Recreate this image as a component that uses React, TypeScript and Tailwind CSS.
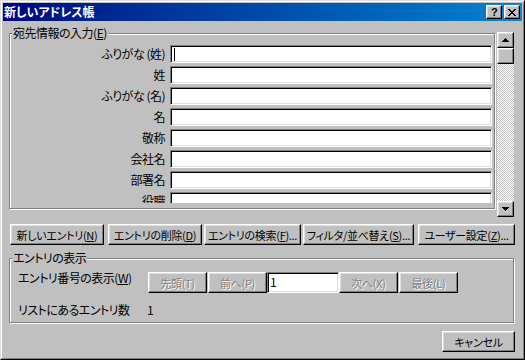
import React from "react";

const raised =
  "border border-t-white border-l-white border-r-black border-b-black shadow-[inset_-1px_-1px_0_#808080,inset_1px_1px_0_#dfdfdf] bg-[#c0c0c0]";
const sunken =
  "border border-t-[#808080] border-l-[#808080] border-r-white border-b-white shadow-[inset_1px_1px_0_#000,inset_-1px_-1px_0_#dfdfdf] bg-white";
const etched =
  "border border-[#808080] shadow-[inset_1px_1px_0_#fff,1px_1px_0_#fff]";

function U({ c }: { c: string }) {
  return <span className="underline underline-offset-[1px]">{c}</span>;
}

function Btn({
  children,
  className,
  disabled,
}: {
  children: React.ReactNode;
  className: string;
  disabled?: boolean;
}) {
  return (
    <div
      className={`${raised} ${className} h-[21px] flex items-center justify-center whitespace-nowrap text-[11px] tracking-[-0.3px] leading-[14px] ${
        disabled ? "text-[#808080] [text-shadow:1px_1px_0_#fff]" : "text-black"
      }`}
    >
      {children}
    </div>
  );
}

const labels = [
  "ふりがな (姓)",
  "姓",
  "ふりがな (名)",
  "名",
  "敬称",
  "会社名",
  "部署名",
  "役職",
];

export default function App() {
  return (
    <div className="w-[525px] h-[360px] bg-[#c0c0c0] border border-t-[#dfdfdf] border-l-[#dfdfdf] border-r-black border-b-black font-['Noto_Sans_CJK_JP','Noto_Sans',sans-serif] [font-feature-settings:'palt'] text-black text-[12px] tracking-[-0.5px] overflow-hidden">
      <div className="h-full border border-t-white border-l-white border-r-[#808080] border-b-[#808080] p-[1px] flex flex-col">
        {/* title bar */}
        <div className="h-[18px] shrink-0 flex items-center bg-linear-to-r from-[#000080] to-[#1084d0] pl-[1px] pr-[2px]">
          <span className="text-white font-bold text-[12px] leading-[14px] tracking-[0px]">
            新しいアドレス帳
          </span>
          <div className="ml-auto flex gap-[2px]">
            <div
              className={`${raised} w-[16px] h-[14px] flex items-center justify-center`}
            >
              <span className="font-['Liberation_Sans',sans-serif] font-bold text-[11px] leading-[11px] text-black">
                ?
              </span>
            </div>
            <div
              className={`${raised} w-[16px] h-[14px] flex items-center justify-center`}
            >
              <svg width="8" height="7" viewBox="0 0 8 7">
                <path
                  d="M0 0h2v1h1v1h2v-1h1v-1h2v1h-1v1h-1v1h-1v1h1v1h1v1h1v1h-2v-1h-1v-1h-2v1h-1v1h-2v-1h1v-1h1v-1h1v-1h-1v-1h-1v-1h-1z"
                  fill="#000"
                />
              </svg>
            </div>
          </div>
        </div>

        {/* body */}
        <div className="flex flex-col pl-[6px] pt-[11px]">
          <div className="flex items-start gap-[2px]">
            {/* group 1 */}
            <div className={`relative mt-[1px] w-[486px] h-[176px] ${etched}`}>
              <span className="absolute -top-[8px] left-[2px] px-[1px] bg-[#c0c0c0] leading-[14px]">
                宛先情報の入力(<U c="E" />)
              </span>
              <div className="mt-[11px] h-[158px] overflow-hidden flex flex-col gap-[3px]">
                {labels.map((l, i) => (
                  <div key={l} className="flex items-center h-[18px] shrink-0">
                    <div className="w-[155px] text-right leading-[14px] whitespace-nowrap">
                      {l}
                    </div>
                    <div
                      className={`${sunken} ml-[5px] w-[322px] h-[18px] flex items-center`}
                    >
                      {i === 0 && (
                        <div className="ml-[3px] w-[1px] h-[13px] bg-black" />
                      )}
                    </div>
                  </div>
                ))}
              </div>
            </div>

            {/* scrollbar */}
            <div className="w-[17px] h-[185px] flex flex-col">
              <div
                className={`${raised} w-[17px] h-[16px] flex items-center justify-center shrink-0`}
              >
                <svg width="7" height="4" viewBox="0 0 7 4">
                  <path d="M3 0h1v1h1v1h1v1h1v1h-7v-1h1v-1h1v-1h1z" fill="#000" />
                </svg>
              </div>
              <div className={`${raised} w-[17px] h-[16px] shrink-0`} />
              <div className="flex-1 [background-image:repeating-conic-gradient(#c0c0c0_0%_25%,#ffffff_0%_50%)] [background-size:2px_2px]" />
              <div
                className={`${raised} w-[17px] h-[16px] flex items-center justify-center shrink-0`}
              >
                <svg width="7" height="4" viewBox="0 0 7 4">
                  <path d="M0 0h7v1h-1v1h-1v1h-1v1h-1v-1h-1v-1h-1v-1h-1z" fill="#000" />
                </svg>
              </div>
            </div>
          </div>

          {/* action buttons */}
          <div className="flex mt-[7px] ml-[1px]">
            <Btn className="w-[94px]">
              新しいエントリ(<U c="N" />)
            </Btn>
            <Btn className="w-[94px] ml-[4px]">
              エントリの削除(<U c="D" />)
            </Btn>
            <Btn className="w-[97px] ml-[2px]">
              エントリの検索(<U c="F" />)...
            </Btn>
            <Btn className="w-[111px] ml-[2px]">
              フィルタ/並べ替え(<U c="S" />)...
            </Btn>
            <Btn className="w-[97px] ml-[4px]">
              ユーザー設定(<U c="Z" />)...
            </Btn>
          </div>

          {/* group 2 */}
          <div className={`relative mt-[13px] w-[505px] h-[65px] ${etched}`}>
            <span className="absolute -top-[8px] left-[2px] px-[1px] bg-[#c0c0c0] leading-[14px]">
              エントリの表示
            </span>
            <div className="flex items-start mt-[13px] ml-[8px]">
              <div className="w-[130px] leading-[12px] whitespace-nowrap">
                エントリ番号の表示(<U c="W" />)
              </div>
              <Btn className="w-[59px]" disabled>
                先頭(T)
              </Btn>
              <Btn className="w-[59px] ml-[1px]" disabled>
                前へ(P)
              </Btn>
              <div className={`${sunken} w-[72px] h-[21px] pl-[2px] leading-[17px]`}>
                1
              </div>
              <Btn className="w-[59px]" disabled>
                次へ(X)
              </Btn>
              <Btn className="w-[59px] ml-[1px]" disabled>
                最後(L)
              </Btn>
            </div>
            <div className="flex items-start mt-[11px] ml-[8px] leading-[12px]">
              <div className="w-[129px] whitespace-nowrap">リストにあるエントリ数</div>
              <div>1</div>
            </div>
          </div>

          {/* cancel */}
          <Btn className="w-[73px] mt-[8px] ml-[433px]">キャンセル</Btn>
        </div>
      </div>
    </div>
  );
}
